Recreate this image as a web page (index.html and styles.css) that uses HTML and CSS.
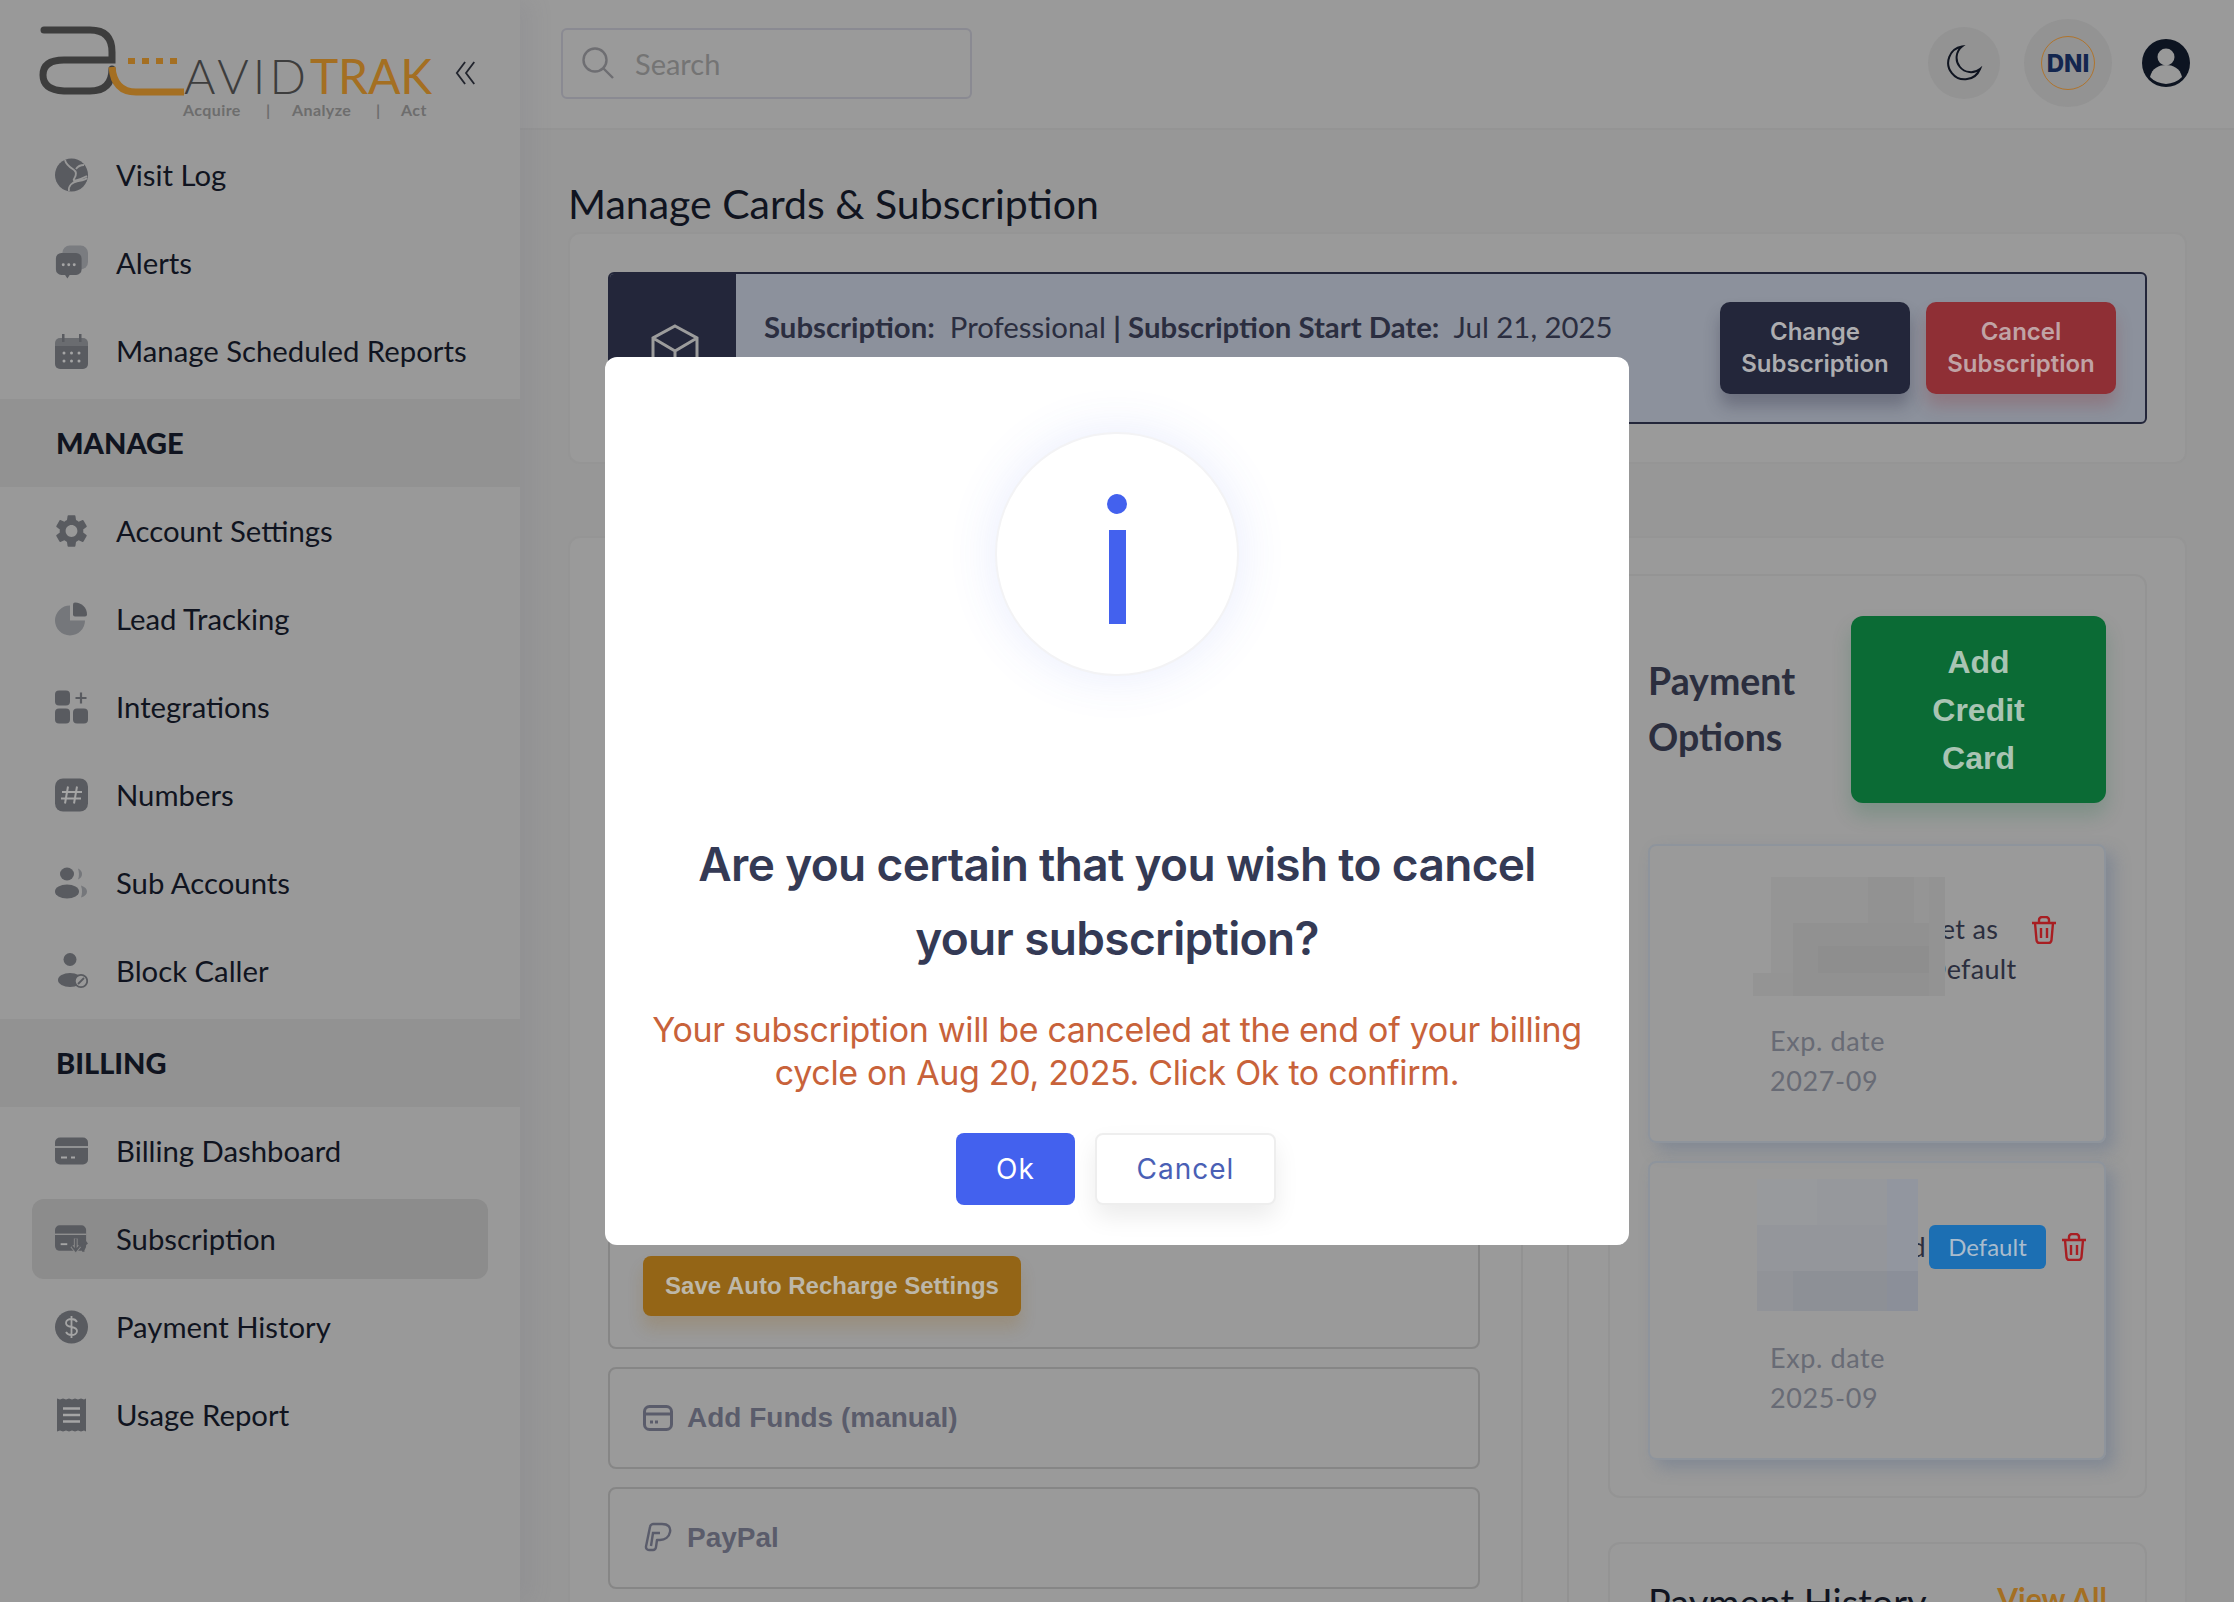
FILE: index.html
```html
<!DOCTYPE html>
<html lang="en">
<head>
    <meta charset="UTF-8">
    <meta name="viewport" content="width=device-width, initial-scale=1.0">
    <title>AvidTrak - Manage Cards &amp; Subscription</title>
    <link rel="stylesheet" href="styles.css">
</head>
<body>

<div class="layout">

    <aside class="sidebar">
        <div class="brand">
            <svg class="logo" viewBox="0 0 394 95" width="394" height="95">
                <path d="M6 5H52Q74 5 74 27V35H26Q5 35 5 50T26 66H52Q74 66 74 44" fill="none" stroke="#3d3d3d" stroke-width="7" stroke-linecap="round"/>
                <path d="M74 42Q76 67 98 67H146" fill="none" stroke="#a46f22" stroke-width="7"/>
                <path d="M90 36H139" fill="none" stroke="#a46f22" stroke-width="6" stroke-dasharray="7 7"/>
                <text x="146" y="69" class="logo-avid" textLength="122">AVID</text>
                <text x="272" y="69" class="logo-trak" textLength="122">TRAK</text>
                <text x="145" y="91" class="logo-tag">Acquire</text>
                <text x="228" y="91" class="logo-tag">|</text>
                <text x="254" y="91" class="logo-tag">Analyze</text>
                <text x="338" y="91" class="logo-tag">|</text>
                <text x="363" y="91" class="logo-tag">Act</text>
            </svg>
            <svg class="collapse" viewBox="0 0 24 30" width="22" height="28">
                <path d="M11 3L2 15l9 12M21 3l-9 12 9 12" fill="none" stroke="#22252e" stroke-width="2"/>
            </svg>
        </div>

        <ul class="menu">
            <li class="menu-item">
                <svg class="menu-icon" viewBox="0 0 33 36"><circle cx="16.500" cy="18" r="16.500" fill="#595b60"/><path d="M10 3c1 5 6 8 9 10s2 6 0 9 5 1 13-3M29 8c-4 0-6 1-8 4M14 34c-1-5 3-9 9-10s7-1 9-3" fill="none" stroke="#999" stroke-width="1.800"/></svg>
                <span>Visit Log</span>
            </li>
            <li class="menu-item">
                <svg class="menu-icon" viewBox="0 0 36 38"><rect x="8" y="0" width="28" height="26" rx="8" fill="#7a7c80"/><path d="M7 8h16a6 6 0 0 1 6 6v12a6 6 0 0 1-6 6h-7l-2.500 4-2.500-4H7a6 6 0 0 1-6-6V14a6 6 0 0 1 6-6z" fill="#595b60"/><g fill="#a5a5a5"><circle cx="9" cy="21" r="1.600"/><circle cx="15" cy="21" r="1.600"/><circle cx="21" cy="21" r="1.600"/></g></svg>
                <span>Alerts</span>
            </li>
            <li class="menu-item">
                <svg class="menu-icon" viewBox="0 0 33 36"><path d="M0 10a5 5 0 0 1 5-5h23a5 5 0 0 1 5 5v3H0z" fill="#6a6c70"/><path d="M0 13h33v18a5 5 0 0 1-5 5H5a5 5 0 0 1-5-5z" fill="#595b60"/><rect x="7" y="1" width="2.500" height="8" fill="#595b60"/><rect x="24" y="1" width="2.500" height="8" fill="#595b60"/><g fill="#a5a5a5"><circle cx="9" cy="20" r="1.500"/><circle cx="16.500" cy="20" r="1.500"/><circle cx="24" cy="20" r="1.500"/><circle cx="9" cy="28" r="1.500"/><circle cx="16.500" cy="28" r="1.500"/><circle cx="24" cy="28" r="1.500"/></g></svg>
                <span>Manage Scheduled Reports</span>
            </li>
        </ul>

        <div class="menu-heading">MANAGE</div>
        <ul class="menu">
            <li class="menu-item">
                <svg class="menu-icon" viewBox="2 1 20 22"><path fill="#595b60" d="M19.140 12.940c.04-.3.06-.61.06-.94 0-.32-.02-.64-.07-.94l2.030-1.580a.49.49 0 0 0 .12-.61l-1.920-3.320a.488.488 0 0 0-.59-.22l-2.390.96c-.5-.38-1.030-.7-1.620-.94l-.36-2.540a.484.484 0 0 0-.48-.41h-3.840c-.24 0-.43.17-.47.41l-.36 2.540c-.59.24-1.130.57-1.620.94l-2.390-.96c-.22-.08-.47 0-.59.22L2.740 8.870c-.12.21-.08.47.12.61l2.030 1.580c-.05.3-.09.63-.09.94s.02.64.07.94l-2.030 1.580a.49.49 0 0 0-.12.61l1.920 3.320c.12.22.37.29.59.22l2.390-.96c.5.38 1.030.7 1.620.94l.36 2.540c.05.24.24.41.48.41h3.840c.24 0 .44-.17.47-.41l.36-2.540c.59-.24 1.130-.56 1.620-.94l2.390.96c.22.08.47 0 .59-.22l1.920-3.320c.12-.22.07-.47-.12-.61l-2.010-1.580zM12 15.600c-1.980 0-3.600-1.620-3.600-3.600s1.620-3.600 3.600-3.600 3.600 1.620 3.600 3.600-1.620 3.600-3.600 3.600z"/></svg>
                <span>Account Settings</span>
            </li>
            <li class="menu-item">
                <svg class="menu-icon" viewBox="0 0 33 33"><path d="M15 3a15 15 0 1 0 15 15H15z" fill="#75777b"/><path d="M20 0a12 12 0 0 1 12 12q0 2-2 2H20q-2 0-2-2V2q0-2 2-2z" fill="#595b60"/></svg>
                <span>Lead Tracking</span>
            </li>
            <li class="menu-item">
                <svg class="menu-icon" viewBox="0 0 33 33"><rect x="0" y="0" width="15" height="15" rx="4" fill="#595b60"/><rect x="0" y="18" width="15" height="15" rx="4" fill="#595b60"/><rect x="18" y="18" width="15" height="15" rx="4" fill="#595b60"/><path d="M26 2v11M20.500 7.500h11" stroke="#595b60" stroke-width="2.200"/></svg>
                <span>Integrations</span>
            </li>
            <li class="menu-item">
                <svg class="menu-icon" viewBox="0 0 33 33"><rect width="33" height="33" rx="8" fill="#595b60"/><path d="M13 8l-3 17M22 8l-3 17M7 13.500h20M6 20h20" stroke="#a5a5a5" stroke-width="2"/></svg>
                <span>Numbers</span>
            </li>
            <li class="menu-item">
                <svg class="menu-icon" viewBox="0 0 33 33"><ellipse cx="12" cy="7.500" rx="7" ry="6.500" fill="#595b60"/><path d="M23 2q4 2 4 5.500T23 13q2-5 0-11z" fill="#75777b"/><ellipse cx="12" cy="25" rx="12" ry="7" fill="#595b60"/><path d="M26 19q6 2 6 6t-6 6q2-6 0-12z" fill="#75777b"/></svg>
                <span>Sub Accounts</span>
            </li>
            <li class="menu-item">
                <svg class="menu-icon" viewBox="0 0 33 36"><circle cx="15" cy="6.500" r="6.500" fill="#595b60"/><ellipse cx="15" cy="27" rx="12" ry="7" fill="#595b60"/><circle cx="26" cy="28" r="6.200" fill="#999" stroke="#595b60" stroke-width="1.800"/><path d="M23 31l6-6" stroke="#595b60" stroke-width="1.800"/></svg>
                <span>Block Caller</span>
            </li>
        </ul>

        <div class="menu-heading">BILLING</div>
        <ul class="menu">
            <li class="menu-item">
                <svg class="menu-icon" viewBox="0 0 33 27"><rect width="33" height="27" rx="5" fill="#595b60"/><path d="M0 9.500h33" stroke="#a5a5a5" stroke-width="1.500"/><path d="M6 20h6M16 20h4" stroke="#a5a5a5" stroke-width="2"/></svg>
                <span>Billing Dashboard</span>
            </li>
            <li class="menu-item menu-item-active">
                <svg class="menu-icon" viewBox="0 0 35 29"><rect width="33" height="27" rx="5" fill="#595b60"/><path d="M0 9.500h33" stroke="#8f8f8f" stroke-width="1.500"/><path d="M6 20h7" stroke="#a5a5a5" stroke-width="2"/><path d="M22 14v13M18 22l4 5 4-5" fill="none" stroke="#8b8b8b" stroke-width="4"/><path d="M22 14v13M18 22l4 5 4-5" fill="none" stroke="#595b60" stroke-width="2"/><path d="M30 28V15M26 20l4-5 4 5" fill="none" stroke="#595b60" stroke-width="2.500"/></svg>
                <span>Subscription</span>
            </li>
            <li class="menu-item">
                <svg class="menu-icon" viewBox="0 0 33 33"><circle cx="16.500" cy="16.500" r="16.500" fill="#595b60"/><path d="M22 11.500c-1-2-3-3-5.500-3-3 0-5.500 1.500-5.500 4s2.500 3.500 5.500 4 5.500 1.500 5.500 4-2.500 4-5.500 4c-2.500 0-4.500-1-5.500-3M16.500 5.500v22" fill="none" stroke="#a5a5a5" stroke-width="1.800"/></svg>
                <span>Payment History</span>
            </li>
            <li class="menu-item">
                <svg class="menu-icon" viewBox="0 0 33 33"><path d="M2 0l3 1 3-1 3 1 3-1 3 1 3-1 3 1 3-1 3 1 2-1v33l-2-1-3 1-3-1-3 1-3-1-3 1-3-1-3 1-3-1-3 1V0z" fill="#595b60"/><path d="M8 10h17M8 16.500h17M8 23h17" stroke="#a5a5a5" stroke-width="2.400"/></svg>
                <span>Usage Report</span>
            </li>
        </ul>
    </aside>

    <div class="main">
        <header class="topbar">
            <div class="search">
                <svg viewBox="0 0 34 34" width="34" height="34"><circle cx="14" cy="14" r="11.500" fill="none" stroke="#6e6e72" stroke-width="2.400"/><path d="M22.500 22.500L32 32" stroke="#6e6e72" stroke-width="2.400"/></svg>
                <span class="search-text">Search</span>
            </div>
            <div class="topbar-actions">
                <div class="theme-btn">
                    <svg viewBox="0 0 38 38" width="38" height="38"><path d="M17 2.500A16.500 16.500 0 1 0 35 25 13.500 13.500 0 0 1 17 2.500z" fill="none" stroke="#0f1420" stroke-width="2"/></svg>
                </div>
                <div class="dni-btn">
                    <div class="dni-ring">DNI</div>
                </div>
                <svg class="user-icon" viewBox="0 0 48 48" width="48" height="48"><circle cx="24" cy="24" r="24" fill="#0d1421"/><circle cx="24" cy="18" r="8.500" fill="#999"/><path d="M8 38c2-9 9-12 16-12s14 3 16 12a22 22 0 0 1-32 0z" fill="#999"/></svg>
            </div>
        </header>

        <main class="content">
            <h2 class="page-title">Manage Cards &amp; Subscription</h2>

            <section class="card sub-card">
                <div class="sub-alert">
                    <div class="sub-alert-icon">
                        <svg viewBox="0 0 50 56" width="50" height="56"><path d="M25 3L47 15V41L25 53 3 41V15zM3 15l22 13 22-13M25 28v25" fill="none" stroke="#9c9c9c" stroke-width="3"/></svg>
                    </div>
                    <div class="sub-alert-text">
                        <b>Subscription:</b>&nbsp; Professional <b>| Subscription Start Date:</b>&nbsp; Jul 21, 2025
                    </div>
                    <div class="sub-alert-actions">
                        <button class="btn-change">Change Subscription</button>
                        <button class="btn-cancel-sub">Cancel Subscription</button>
                    </div>
                </div>
            </section>

            <section class="card billing-card">
                <div class="billing-left">
                    <div class="method-box recharge-box">
                        <button class="btn-save">Save Auto Recharge Settings</button>
                    </div>
                    <div class="method-box">
                        <svg viewBox="0 0 30 26" width="30" height="26"><rect x="1.500" y="1.500" width="27" height="23" rx="5" fill="none" stroke="#5a5c6b" stroke-width="3"/><path d="M2 9h26" stroke="#5a5c6b" stroke-width="3"/><path d="M7 17h3M12 17h3" stroke="#5a5c6b" stroke-width="3"/></svg>
                        <span>Add Funds (manual)</span>
                    </div>
                    <div class="method-box">
                        <svg viewBox="0 0 30 32" width="30" height="32"><path d="M11 2h8c6 0 9 3 8 8s-5 8-10 8h-3l-1 7a3 3 0 0 1-3 3H6a3 3 0 0 1-3-3.500L7 5a3.500 3.500 0 0 1 4-3z" fill="none" stroke="#5a5c6b" stroke-width="2.400" stroke-linejoin="round"/><path d="M8 24l2-13h7" fill="none" stroke="#5a5c6b" stroke-width="2.400"/></svg>
                        <span>PayPal</span>
                    </div>
                </div>

                <div class="billing-right">
                    <div class="pay-card">
                        <div class="pay-head">
                            <h3>Payment Options</h3>
                            <button class="btn-add">Add Credit Card</button>
                        </div>

                        <div class="credit-card">
                            <div class="credit-head">
                                <span class="credit-name"></span>
                                <span class="set-default">Set as Default</span>
                                <svg class="trash" viewBox="0 0 26 28" width="26" height="28"><path d="M1 7h24M4 7l1.500 17a3 3 0 0 0 3 3h9a3 3 0 0 0 3-3L22 7M8 7V4a3 3 0 0 1 3-3h4a3 3 0 0 1 3 3v3M10 12v10M16 12v10" fill="none" stroke="#a81e22" stroke-width="2.400"/></svg>
                            </div>
                            <div class="credit-exp">Exp. date<br>2027-09</div>
                            <svg class="mosaic mosaic-one" viewBox="0 0 192 119" width="192" height="119">
                                <rect x="18" width="174" height="96" fill="#959595"/>
                                <rect x="0" y="96" width="192" height="23" fill="#949494"/>
                                <rect x="40" y="46" width="152" height="73" fill="#919191"/>
                                <rect x="115" y="0" width="46" height="46" fill="#929292"/>
                                <rect x="65" y="69" width="115" height="27" fill="#8e8e8e"/>
                                <rect x="176" y="0" width="16" height="119" fill="#939393"/>
                            </svg>
                        </div>

                        <div class="credit-card">
                            <div class="credit-head">
                                <span class="credit-name">Card</span>
                                <span class="badge">Default</span>
                                <svg class="trash" viewBox="0 0 26 28" width="26" height="28"><path d="M1 7h24M4 7l1.500 17a3 3 0 0 0 3 3h9a3 3 0 0 0 3-3L22 7M8 7V4a3 3 0 0 1 3-3h4a3 3 0 0 1 3 3v3M10 12v10M16 12v10" fill="none" stroke="#a81e22" stroke-width="2.400"/></svg>
                            </div>
                            <div class="credit-exp">Exp. date<br>2025-09</div>
                            <svg class="mosaic mosaic-two" viewBox="0 0 161 132" width="161" height="132">
                                <rect width="161" height="132" fill="#989a9d"/>
                                <rect x="60" width="70" height="46" fill="#96989c"/>
                                <rect y="46" width="161" height="46" fill="#94969b"/>
                                <rect y="92" width="161" height="40" fill="#919398"/>
                                <rect x="36" y="92" width="125" height="40" fill="#8d9096"/>
                                <rect x="130" width="31" height="92" fill="#92969f"/>
                                <rect x="130" y="92" width="31" height="40" fill="#8b8f99"/>
                            </svg>
                        </div>
                    </div>

                    <div class="pay-card history-card">
                        <h3>Payment History</h3>
                        <span class="view-all">View All</span>
                    </div>
                </div>
            </section>
        </main>
    </div>
</div>

<div class="modal">
    <div class="modal-icon">
        <span class="modal-dot"></span>
        <span class="modal-bar"></span>
    </div>
    <h2>Are you certain that you wish to cancel your subscription?</h2>
    <p>Your subscription will be canceled at the end of your billing cycle on Aug 20, 2025. Click Ok to confirm.</p>
    <div class="modal-actions">
        <button class="btn-ok">Ok</button>
        <button class="btn-dismiss">Cancel</button>
    </div>
</div>

</body>
</html>
```

FILE: styles.css
```css
* {
    box-sizing: border-box;
}

html, body {
    height: 100%;
}

body {
    margin: 0;
    font-family: "Lato", "Open Sans", sans-serif;
    background: #979797;
    color: #101420;
    overflow: hidden;
}

button {
    border: none;
    cursor: pointer;
}

.layout {
    display: flex;
    height: 1602px;
    overflow: hidden;
}

/* sidebar */

.sidebar {
    flex: 0 0 520px;
    background: #999999;
    box-shadow: 12px 0 20px rgba(110, 110, 125, 0.12);
    z-index: 1;
}

.brand {
    height: 131px;
    padding: 25px 0 0 38px;
    display: flex;
    align-items: flex-start;
    gap: 23px;
}

.logo text {
    font-family: "Lato", sans-serif;
}

.logo-avid {
    font-size: 48px;
    font-weight: 300;
    fill: #3d3d3d;
}

.logo-trak {
    font-size: 48px;
    font-weight: 400;
    fill: #a46f22;
}

.logo-tag {
    font-size: 16px;
    font-weight: 700;
    letter-spacing: 0.4px;
    fill: #6d6d6d;
}

.collapse {
    margin-top: 34px;
}

.menu {
    list-style: none;
    margin: 0;
    padding: 0;
}

.menu-item {
    height: 88px;
    display: flex;
    align-items: center;
    padding: 0 0 1px 55px;
    font-size: 29.300px;
}

.menu-icon {
    flex: 0 0 33px;
    width: 33px;
    height: 36px;
    margin-right: 28px;
}

.menu-item-active {
    height: 80px;
    margin: 4px 32px;
    padding-left: 23px;
    background: #8c8c8c;
    border-radius: 12px;
}

.menu-heading {
    height: 88px;
    margin-top: 4px;
    padding: 0 0 1px 56px;
    display: flex;
    align-items: center;
    background: #929292;
    font-size: 29px;
    font-weight: 900;
}

/* top bar */

.main {
    flex: 1;
    min-width: 0;
}

.topbar {
    height: 130px;
    display: flex;
    align-items: center;
    justify-content: space-between;
    padding: 0 44px 2px 41px;
    background: #9a9a9a;
    border-bottom: 2px solid #949494;
}

.search {
    width: 411px;
    height: 71px;
    display: flex;
    align-items: center;
    gap: 20px;
    padding-left: 18px;
    border: 2px solid #8a8a92;
    border-radius: 6px;
}

.search-text {
    font-size: 29px;
    color: #747474;
}

.topbar-actions {
    display: flex;
    align-items: center;
}

.theme-btn {
    width: 72px;
    height: 72px;
    display: flex;
    align-items: center;
    justify-content: center;
    background: #939393;
    border-radius: 50%;
}

.dni-btn {
    width: 88px;
    height: 88px;
    margin: 0 30px 0 24px;
    display: flex;
    align-items: center;
    justify-content: center;
    background: #939393;
    border-radius: 50%;
}

.dni-ring {
    width: 54px;
    height: 54px;
    flex: none;
    display: flex;
    align-items: center;
    justify-content: center;
    border: 1px solid #b0742c;
    border-radius: 50%;
    font-family: "Inter", sans-serif;
    font-size: 24px;
    font-weight: 800;
    color: #13264f;
}

/* content */

.content {
    padding: 0 47px 0 48px;
}

.page-title {
    margin: 0 0 3px;
    padding-top: 49px;
    font-size: 41px;
    line-height: 50px;
    font-weight: 400;
    color: #101420;
}

.card {
    background: #9a9a9a;
    border: 2px solid #959595;
    border-radius: 12px;
}

.sub-card {
    height: 232px;
    padding: 38px;
}

.sub-alert {
    height: 152px;
    display: flex;
    background: #8c919c;
    border: 2px solid #23263a;
    border-radius: 6px;
    overflow: hidden;
}

.sub-alert-icon {
    flex: 0 0 128px;
    margin: -2px 0 -2px -2px;
    display: flex;
    justify-content: center;
    align-items: center;
    padding: 6px 0 0 6px;
    background: #23263a;
}

.sub-alert-text {
    flex: 1;
    padding: 33px 0 0 28px;
    font-size: 29.350px;
    line-height: 40px;
    color: #2b2e40;
}

.sub-alert-text b {
    font-weight: 700;
}

.sub-alert-actions {
    display: flex;
    gap: 16px;
    padding: 28px 29px 0 0;
}

.sub-alert-actions button {
    width: 190px;
    height: 92px;
    padding: 0 10px;
    border-radius: 10px;
    font-family: "Inter", sans-serif;
    font-size: 24px;
    font-weight: 600;
    line-height: 32px;
    color: #adadb0;
}

.btn-change {
    background: #23263a;
    box-shadow: 0 12px 16px rgba(35, 38, 58, 0.3);
}

.sub-alert-actions .btn-cancel-sub {
    background: #8f2f35;
    color: #c0a3a5;
    box-shadow: 0 12px 16px rgba(143, 47, 53, 0.25);
}

.billing-card {
    margin-top: 72px;
    height: 1200px;
    display: flex;
    justify-content: space-between;
}

.billing-left {
    width: 953px;
    padding: 38px 41px 0 38px;
    border-right: 2px solid #929292;
    display: flex;
    flex-direction: column;
    gap: 18px;
}

.method-box {
    height: 102px;
    flex: none;
    display: flex;
    align-items: center;
    gap: 14px;
    padding-left: 33px;
    border: 2px solid #868686;
    border-radius: 8px;
    font-family: "Liberation Sans", sans-serif;
    font-size: 28px;
    font-weight: 700;
    color: #5a5c6b;
}

.recharge-box {
    height: 773px;
    align-items: flex-end;
    padding-bottom: 31px;
}

.btn-save {
    width: 378px;
    height: 60px;
    background: #946516;
    border-radius: 8px;
    font-family: "Liberation Sans", sans-serif;
    font-size: 24px;
    font-weight: 700;
    color: #bdb7a8;
    box-shadow: 0 12px 16px rgba(148, 101, 22, 0.2);
}

.billing-right {
    width: 618px;
    padding: 36px 38px 0 39px;
    border-left: 2px solid #929292;
}

.pay-card {
    width: 539px;
    height: 924px;
    padding: 40px 39px 0 38px;
    border: 2px solid #949494;
    border-radius: 12px;
}

.pay-head {
    display: flex;
    align-items: center;
    justify-content: space-between;
    margin-bottom: 41px;
}

.pay-card h3 {
    margin: 0;
    width: 160px;
    padding-bottom: 2px;
    font-size: 37.500px;
    line-height: 56px;
    font-weight: 700;
    color: #2b2e3e;
}

.btn-add {
    width: 255px;
    height: 187px;
    padding: 0 50px;
    background: #0b6b35;
    border-radius: 12px;
    font-family: "Liberation Sans", sans-serif;
    font-size: 32px;
    font-weight: 700;
    line-height: 48px;
    color: #a9c4b3;
    box-shadow: 0 12px 20px rgba(11, 107, 53, 0.2);
}

.credit-card {
    position: relative;
    height: 299px;
    margin-bottom: 18px;
    border: 2px solid #8e949c;
    border-radius: 8px;
    box-shadow: 8px 8px 16px rgba(100, 115, 140, 0.45);
}

.credit-head {
    height: 112px;
    margin-top: 28px;
    padding-left: 120px;
    display: flex;
    align-items: center;
    font-size: 27px;
    line-height: 40px;
    letter-spacing: 0.3px;
    color: #2b2e3e;
}

.credit-name {
    width: 156px;
    text-align: right;
}

.set-default {
    align-self: flex-start;
    width: 122px;
    margin-top: 35px;
}

.trash {
    margin-left: 15px;
}

.credit-card .set-default + .trash {
    margin-left: -17px;
}

.badge {
    width: 117px;
    height: 44px;
    margin-left: 3px;
    display: flex;
    align-items: center;
    justify-content: center;
    background: #1c6fb3;
    border-radius: 6px;
    font-size: 24px;
    letter-spacing: 0;
    color: #a9bccd;
}

.credit-exp {
    margin-top: 35px;
    padding-left: 120px;
    font-size: 27px;
    line-height: 40px;
    letter-spacing: 0.6px;
    color: #686b75;
}

.mosaic {
    position: absolute;
}

.mosaic-one {
    left: 103px;
    top: 31px;
}

.mosaic-two {
    left: 107px;
    top: 16px;
}

.history-card {
    position: relative;
    margin-top: 44px;
    height: 200px;
    padding-top: 30px;
}

.history-card h3 {
    width: auto;
    font-size: 38px;
    font-weight: 400;
    color: #101420;
}

.view-all {
    position: absolute;
    top: 36px;
    right: 38px;
    font-size: 30px;
    font-weight: 700;
    color: #a46f22;
}

/* modal */

.modal {
    position: fixed;
    left: 605px;
    top: 357px;
    width: 1024px;
    height: 888px;
    padding: 75px 40px 0;
    display: flex;
    flex-direction: column;
    align-items: center;
    background: #ffffff;
    border-radius: 12px;
    font-family: "Inter", sans-serif;
    text-align: center;
    z-index: 10;
}

.modal-icon {
    width: 244px;
    height: 244px;
    flex: none;
    display: flex;
    flex-direction: column;
    align-items: center;
    padding-top: 60px;
    background: #ffffff;
    border: 2px solid #f3f3f5;
    border-radius: 50%;
    box-shadow: 0 0 50px rgba(67, 97, 238, 0.12);
}

.modal-dot {
    width: 20px;
    height: 20px;
    margin-bottom: 16px;
    background: #4361ee;
    border-radius: 50%;
}

.modal-bar {
    width: 17px;
    height: 94px;
    background: #4361ee;
}

.modal h2 {
    margin: 151px 0 0;
    width: 880px;
    font-size: 46px;
    line-height: 74px;
    font-weight: 600;
    letter-spacing: -0.650px;
    color: #343a55;
}

.modal p {
    margin: 33px 0 0;
    width: 960px;
    font-size: 34px;
    line-height: 43px;
    letter-spacing: -0.330px;
    color: #c8623a;
}

.modal-actions {
    display: flex;
    gap: 20px;
    margin: 39px 0 0 -2px;
}

.modal-actions button {
    height: 72px;
    border-radius: 8px;
    font-family: "Inter", sans-serif;
    font-size: 28px;
    letter-spacing: 1px;
}

.btn-ok {
    width: 119px;
    background: #4361ee;
    color: #ffffff;
}

.btn-dismiss {
    width: 181px;
    background: #ffffff;
    border: 2px solid #eeeeee;
    color: #4a5fb5;
    box-shadow: 0 12px 24px rgba(0, 0, 0, 0.08);
}
```
